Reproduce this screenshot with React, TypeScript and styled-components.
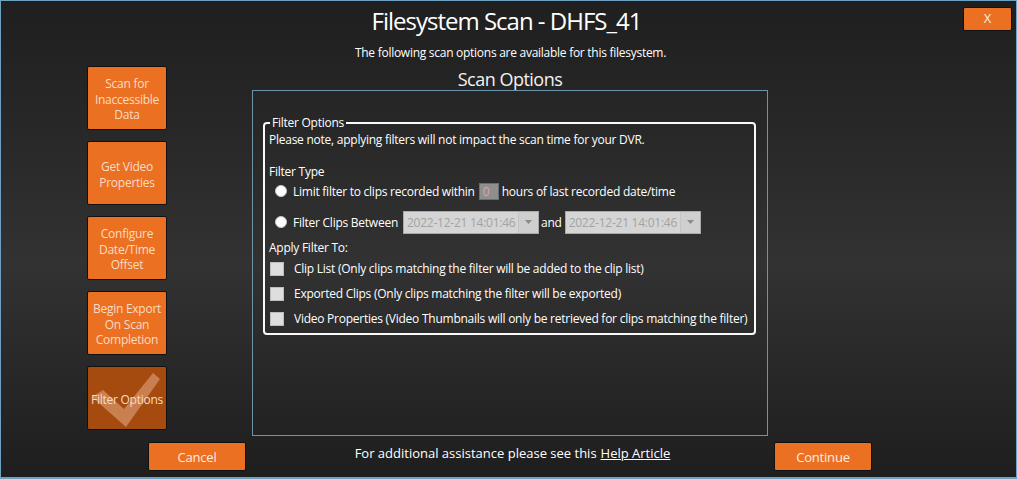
import React from 'react';
import styled, { createGlobalStyle } from 'styled-components';

const GlobalStyle = createGlobalStyle`
  html, body {
    margin: 0;
    padding: 0;
    background: #1e1e1e;
    overflow: hidden;
  }
  body {
    font-family: "Open Sans", "Noto Sans", sans-serif;
  }
`;

const Window = styled.div`
  box-sizing: border-box;
  width: 1017px;
  height: 479px;
  border: 1px solid #6ea2c3;
  border-bottom-width: 2px;
  background: linear-gradient(
    to bottom,
    #1f1f1f 0%,
    #272727 25%,
    #323232 55%,
    #272727 80%,
    #1e1e1e 100%
  );
  color: #fff;
  display: flex;
  flex-direction: column;
`;

const Header = styled.header`
  display: grid;
  grid-template-columns: 1fr auto 1fr;
  align-items: start;
  padding: 5px 4px 0 0;
`;

const Title = styled.h1`
  grid-column: 2;
  margin: 0;
  font-size: 24px;
  line-height: 30px;
  font-weight: 400;
  letter-spacing: -1px;
  color: #fff;
`;

const OrangeButton = styled.button<{ $w: number; $h: number }>`
  box-sizing: border-box;
  width: ${({ $w }) => $w}px;
  height: ${({ $h }) => $h}px;
  background: #eb7021;
  border: 1px solid #111;
  border-radius: 2px;
  color: #fbeee2;
  font-family: inherit;
  font-size: 13px;
  letter-spacing: -0.2px;
  padding: 0;
  cursor: pointer;
`;

const CloseButton = styled(OrangeButton)`
  grid-column: 3;
  justify-self: end;
  margin-top: 1px;
  padding-bottom: 2px;
`;

const Subtitle = styled.p`
  margin: 9px 0 0;
  text-align: center;
  font-size: 12px;
  line-height: 16px;
  letter-spacing: -0.27px;
  padding-left: 4px;
`;

const Content = styled.div`
  display: flex;
  padding-left: 86px;
`;

const SideColumn = styled.nav`
  display: flex;
  flex-direction: column;
  gap: 11px;
  padding-top: 5px;
  width: 80px;
`;

const SideButton = styled.button<{ $active?: boolean }>`
  position: relative;
  box-sizing: border-box;
  width: 80px;
  height: 64px;
  padding: 3px 0 0;
  background: ${({ $active }) => ($active ? '#a64b0f' : '#eb7021')};
  border: 1px solid #111;
  border-radius: 2px;
  color: #f9dcc4;
  font-family: inherit;
  font-size: 12px;
  line-height: 15.5px;
  letter-spacing: -0.25px;
  white-space: nowrap;
  text-align: center;
  overflow: hidden;
`;

const Check = styled.svg`
  position: absolute;
  left: 0;
  top: 0;
`;

const SideLabel = styled.span`
  position: relative;
`;

const MainColumn = styled.section`
  margin-left: 85px;
  width: 516px;
  display: flex;
  flex-direction: column;
`;

const SectionTitle = styled.h2`
  margin: 0;
  padding-top: 6px;
  height: 23px;
  font-size: 18px;
  line-height: 24px;
  font-weight: 400;
  letter-spacing: -0.5px;
  text-align: center;
  color: #f2f2f2;
`;

const Panel = styled.div`
  box-sizing: border-box;
  height: 346px;
  border: 1px solid #6c94ad;
  padding: 25px 11px 0 10px;
`;

const GroupBox = styled.fieldset`
  box-sizing: border-box;
  margin: 0;
  min-width: 0;
  width: 493px;
  padding: 0 4px 2px 4px;
  border: 2px solid #fafafa;
  border-radius: 4px;
  display: flex;
  flex-direction: column;
  font-size: 12px;
  letter-spacing: -0.25px;
`;

const Legend = styled.legend`
  padding: 0 2px;
  margin: 0 0 2px 1px;
  font-size: 12px;
  line-height: 14px;
`;

const Line = styled.div<{ $mt?: number }>`
  line-height: 16px;
  margin-top: ${({ $mt }) => $mt ?? 0}px;
  white-space: nowrap;
`;

const OptionRow = styled.label<{ $h: number; $mt?: number }>`
  display: flex;
  align-items: center;
  height: ${({ $h }) => $h}px;
  margin-top: ${({ $mt }) => $mt ?? 0}px;
  white-space: nowrap;
`;

const Radio = styled.span`
  box-sizing: border-box;
  width: 12px;
  height: 12px;
  margin: 0 6px 0 6px;
  border-radius: 50%;
  background: #fdfdfd;
  border: 1px solid #c9c9c9;
  flex: none;
`;

const NumberBox = styled.span`
  box-sizing: border-box;
  width: 20px;
  height: 17px;
  margin: 0 3px 0 4px;
  background: #8f8f8f;
  border: 1px solid #6e6e6e;
  color: #cfa9a9;
  font-size: 12px;
  line-height: 15px;
  padding-left: 3px;
`;

const Combo = styled.span<{ $ml: number }>`
  box-sizing: border-box;
  display: flex;
  width: 136px;
  height: 23px;
  margin-left: ${({ $ml }) => $ml}px;
  border: 1px solid #a9a9a9;
  background: #d5d5d5;
  color: #a3a3a3;
  font-size: 12px;
`;

const ComboText = styled.span`
  flex: 1;
  line-height: 21px;
  padding-left: 3px;
`;

const ComboArrow = styled.span`
  width: 19px;
  display: flex;
  align-items: center;
  justify-content: center;
  background-color: #cfcfcf;
  background-image: radial-gradient(#dedede 0.6px, transparent 0.7px);
  background-size: 2px 2px;
  border-left: 1px solid #c4c4c4;
`;

const AndText = styled.span`
  margin: 0 3px 0 2px;
`;

const CheckBox = styled.span`
  box-sizing: border-box;
  width: 14px;
  height: 14px;
  margin: 0 10px 0 1px;
  border: 1px solid #bdbdbd;
  background-color: #dedede;
  background-image: radial-gradient(#ececec 0.6px, transparent 0.7px);
  background-size: 2px 2px;
  flex: none;
`;

const Footer = styled.footer`
  display: flex;
  align-items: flex-start;
  margin-top: 6px;
  padding: 0 144px 0 147px;
`;

const HelpText = styled.p`
  flex: 1;
  margin: 0;
  padding: 2px 0 0 5px;
  text-align: center;
  font-size: 13px;
  line-height: 18px;
  color: #fff;
`;

const HelpLink = styled.a`
  color: #fff;
  text-decoration: underline;
  margin-left: 4px;
`;

const sideItems = [
  ['Scan for', 'Inaccessible', 'Data'],
  ['Get Video', 'Properties'],
  ['Configure', 'Date/Time', 'Offset'],
  ['Begin Export', 'On Scan', 'Completion'],
];

const ArrowIcon = () => (
  <svg width="7" height="4" viewBox="0 0 7 4">
    <path d="M0 0 H7 L3.5 4 Z" fill="#8a8a8a" />
  </svg>
);

const DateCombo = ({ ml }: { ml: number }) => (
  <Combo $ml={ml}>
    <ComboText>2022-12-21 14:01:46</ComboText>
    <ComboArrow>
      <ArrowIcon />
    </ComboArrow>
  </Combo>
);

export default function App() {
  return (
    <>
      <GlobalStyle />
      <Window>
        <Header>
          <Title>Filesystem Scan - DHFS_41</Title>
          <CloseButton $w={49} $h={24}>X</CloseButton>
        </Header>
        <Subtitle>The following scan options are available for this filesystem.</Subtitle>
        <Content>
          <SideColumn>
            {sideItems.map((lines) => (
              <SideButton key={lines.join(' ')}>
                {lines.map((l) => (
                  <div key={l}>{l}</div>
                ))}
              </SideButton>
            ))}
            <SideButton $active>
              <Check width="80" height="64" viewBox="0 0 80 64">
                <path
                  d="M4 30 L15 23 L36 42 L65 6 L72 12 L38 60 Z"
                  fill="rgba(235, 180, 145, 0.5)"
                />
              </Check>
              <SideLabel>Filter Options</SideLabel>
            </SideButton>
          </SideColumn>
          <MainColumn>
            <SectionTitle>Scan Options</SectionTitle>
            <Panel>
              <GroupBox>
                <Legend>Filter Options</Legend>
                <Line>Please note, applying filters will not impact the scan time for your DVR.</Line>
                <Line $mt={16}>Filter Type</Line>
                <OptionRow $h={22}>
                  <Radio />
                  Limit filter to clips recorded within
                  <NumberBox>0</NumberBox>
                  hours of last recorded date/time
                </OptionRow>
                <OptionRow $h={26} $mt={7}>
                  <Radio />
                  Filter Clips Between
                  <DateCombo ml={5} />
                  <AndText>and</AndText>
                  <DateCombo ml={0} />
                </OptionRow>
                <Line $mt={5}>Apply Filter To:</Line>
                <OptionRow $h={25}>
                  <CheckBox />
                  Clip List (Only clips matching the filter will be added to the clip list)
                </OptionRow>
                <OptionRow $h={25}>
                  <CheckBox />
                  Exported Clips (Only clips matching the filter will be exported)
                </OptionRow>
                <OptionRow $h={25}>
                  <CheckBox />
                  Video Properties (Video Thumbnails will only be retrieved for clips matching the filter)
                </OptionRow>
              </GroupBox>
            </Panel>
          </MainColumn>
        </Content>
        <Footer>
          <OrangeButton $w={98} $h={29}>Cancel</OrangeButton>
          <HelpText>
            For additional assistance please see this
            <HelpLink href="#">Help Article</HelpLink>
          </HelpText>
          <OrangeButton $w={98} $h={29}>Continue</OrangeButton>
        </Footer>
      </Window>
    </>
  );
}
